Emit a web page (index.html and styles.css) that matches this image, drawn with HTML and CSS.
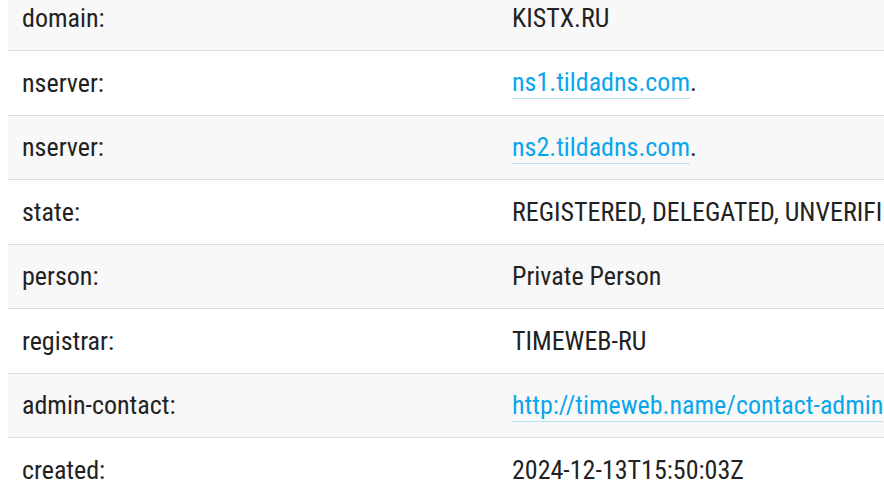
FILE: index.html
```html
<!DOCTYPE html>
<html>
<head>
<meta charset="utf-8">
<link rel="stylesheet" href="styles.css">
</head>
<body>
<table class="whois">
  <tbody>
    <tr class="odd"><td class="key">domain:</td><td class="val">KISTX.RU</td></tr>
    <tr><td class="key">nserver:</td><td class="val"><a class="lnk" href="#">ns1.tildadns.com</a>.</td></tr>
    <tr class="odd"><td class="key">nserver:</td><td class="val"><a class="lnk" href="#">ns2.tildadns.com</a>.</td></tr>
    <tr><td class="key">state:</td><td class="val">REGISTERED, DELEGATED, UNVERIFIED</td></tr>
    <tr class="odd"><td class="key">person:</td><td class="val">Private Person</td></tr>
    <tr><td class="key">registrar:</td><td class="val">TIMEWEB-RU</td></tr>
    <tr class="odd"><td class="key">admin-contact:</td><td class="val"><a class="lnk" href="#">http://timeweb.name/contact-admin</a></td></tr>
    <tr><td class="key">created:</td><td class="val">2024-12-13T15:50:03Z</td></tr>
  </tbody>
</table>
</body>
</html>
```
FILE: styles.css
```css
html, body {
  margin: 0;
  padding: 0;
  overflow: hidden;
  background: #fff;
}
body {
  padding-left: 8px;
  font-family: Roboto, "Liberation Sans", sans-serif;
  font-stretch: 87.5%;
  color: #222;
}
.whois {
  border-collapse: collapse;
  width: 1000px;
  margin-top: -13.5px;
  font-size: 26px;
}
.whois tr {
  background: #fff;
  border-bottom: 1px solid #ddd;
}
.whois tr.odd {
  background: #f8f8f8;
}
.whois td {
  height: 63.5px;
  padding: 0 14px;
  vertical-align: middle;
  white-space: nowrap;
  line-height: 30px;
}
.whois td.key {
  width: 462px;
}
.lnk {
  color: #0aa6ec;
  text-decoration: none;
  border-bottom: 1px solid #b5e2f8;
  display: inline-block;
  line-height: 32px;
}
```
